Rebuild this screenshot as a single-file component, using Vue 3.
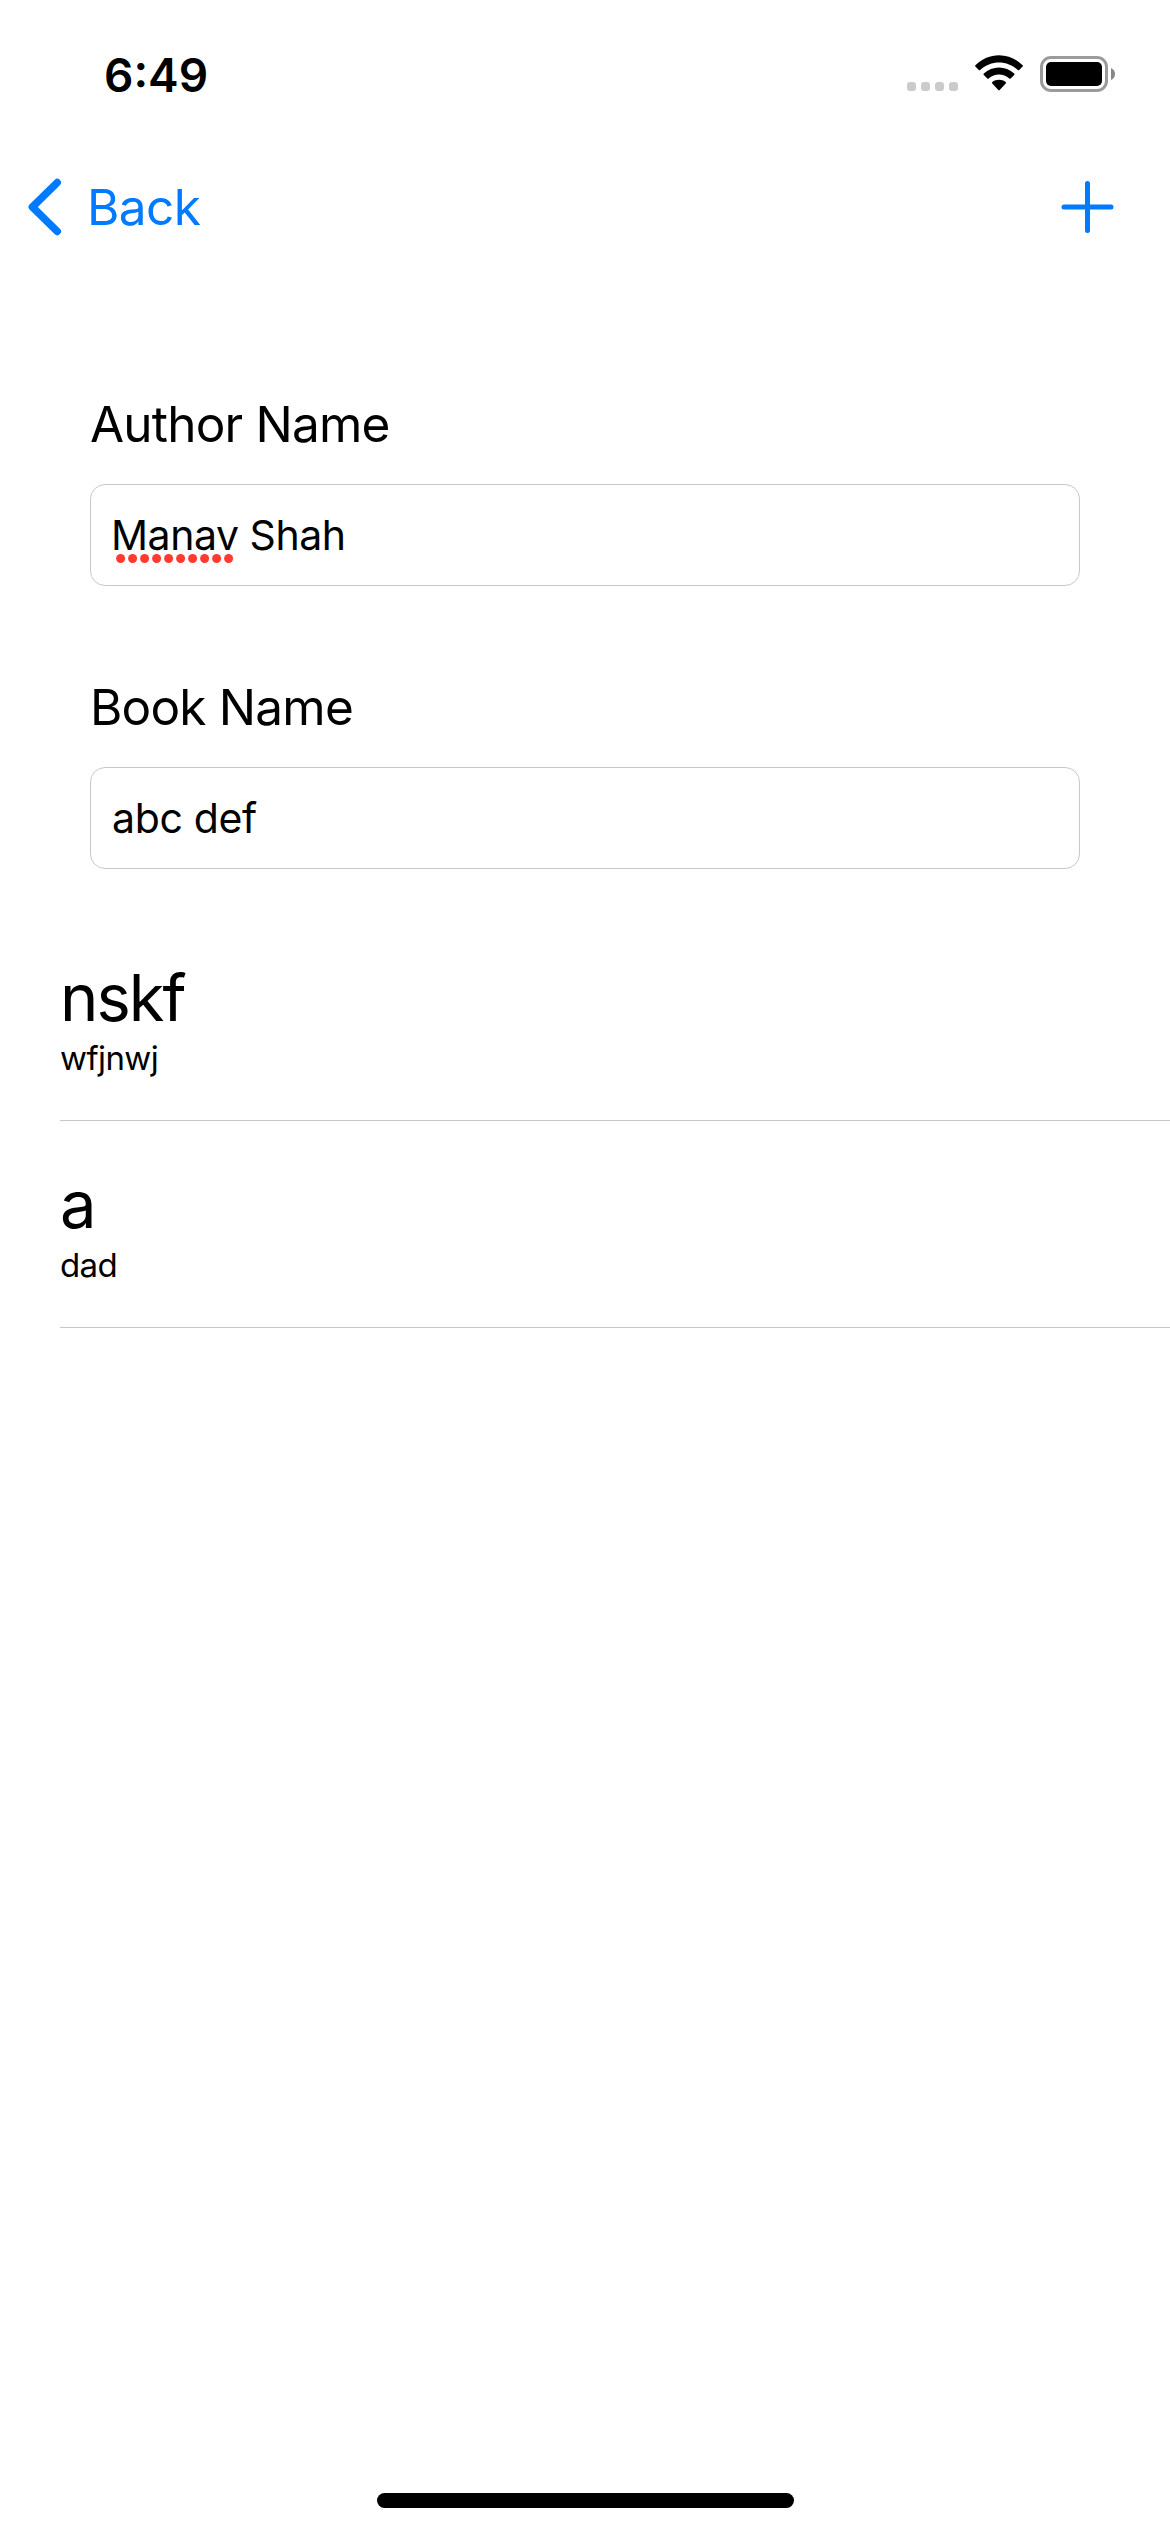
<script setup>
import { ref } from 'vue'

const author = ref({ flagged: 'Manav', rest: ' Shah' })
const book = ref('abc def')
const entries = ref([
  { title: 'nskf', subtitle: 'wfjnwj' },
  { title: 'a', subtitle: 'dad' },
])
</script>

<template>
  <div class="screen">
    <header class="status">
      <span class="time">6:49</span>
      <div class="indicators">
        <svg class="cell" width="51" height="9" viewBox="0 0 51 9" fill="#cbcbcb">
          <rect v-for="i in 4" :key="i" :x="(i - 1) * 14" y="0" width="9" height="9" rx="3" />
        </svg>
        <svg class="wifi" width="48" height="36" viewBox="0 0 48 36">
          <path d="M0.4 10.2C13.5-3.2 34.5-3.2 47.6 10.2Q48.3 10.9 47.6 11.6L44.2 15Q43.5 15.7 42.8 15C32.4 5 15.6 5 5.2 15Q4.5 15.7 3.8 15L0.4 11.6Q-0.3 10.9 0.4 10.2Z" />
          <path d="M8.8 18.6C17.2 10.5 30.8 10.5 39.2 18.6Q39.9 19.3 39.2 20L35.7 23.5Q35 24.2 34.3 23.5C28.5 18.3 19.5 18.3 13.7 23.5Q13 24.2 12.3 23.5L8.8 20Q8.1 19.3 8.8 18.6Z" />
          <path d="M17.3 27.1C21 23.9 27 23.9 30.7 27.1Q31.5 27.8 30.7 28.6L24.7 34.9Q24 35.7 23.3 34.9L17.3 28.6Q16.5 27.8 17.3 27.1Z" />
        </svg>
        <svg class="battery" width="75" height="36" viewBox="0 0 75 36">
          <rect x="1.5" y="1.5" width="65" height="33" rx="9.5" fill="none" stroke="#9b9b9b" stroke-width="3" />
          <rect x="6" y="6" width="56" height="24" rx="5" />
          <path d="M71 12Q75 14 75 18Q75 22 71 24Z" fill="#868686" />
        </svg>
      </div>
    </header>

    <nav class="nav">
      <a class="back">
        <svg width="34" height="58" viewBox="0 0 34 58" fill="none" stroke="#007aff" stroke-width="7.6" stroke-linecap="round" stroke-linejoin="round">
          <path d="M29.2 4.6L4.4 29L29.2 53.4" />
        </svg>
        <span>Back</span>
      </a>
      <svg class="add" width="53" height="53" viewBox="0 0 53 53" stroke="#007aff" stroke-width="5" stroke-linecap="round">
        <path d="M3 26H50M26.5 2.5V49.5" />
      </svg>
    </nav>

    <main>
      <form class="form">
        <div class="field">
          <label class="label">Author Name</label>
          <div class="input author"><span class="flagged">{{ author.flagged }}<svg class="dots" width="118" height="9" viewBox="0 0 118 9" fill="#ff3b30"><circle v-for="i in 10" :key="i" :cx="4.6 + (i - 1) * 12" cy="4.5" r="4.5" /></svg></span>{{ author.rest }}</div>
        </div>
        <div class="field">
          <label class="label">Book Name</label>
          <div class="input book">{{ book }}</div>
        </div>
      </form>
      <ul class="list">
        <li v-for="entry in entries" :key="entry.title" class="row">
          <div class="title">{{ entry.title }}</div>
          <div class="subtitle">{{ entry.subtitle }}</div>
        </li>
      </ul>
    </main>

    <footer class="home"><div class="bar"></div></footer>
  </div>
</template>

<style>
body {
  background: #fff;
}
</style>

<style scoped>
.screen {
  display: flex;
  flex-direction: column;
  box-sizing: border-box;
  width: 1170px;
  height: 2532px;
  background: #fff;
  color: #000;
  font-family: Inter, "Liberation Sans", sans-serif;
}
.status {
  display: flex;
  justify-content: space-between;
  box-sizing: border-box;
  height: 147px;
  padding: 45px 55px 0 104px;
}
.time {
  font-size: 46px;
  line-height: 60px;
  font-weight: 600;
}
.indicators {
  display: flex;
  align-items: flex-end;
  height: 46px;
}
.wifi {
  margin: 0 17px 0 17px;
}
.cell,
.wifi,
.battery {
  display: block;
}
.battery {
  margin-bottom: -1px;
}
.nav {
  display: flex;
  align-items: center;
  justify-content: space-between;
  box-sizing: border-box;
  height: 120px;
  padding: 0 56px 0 28px;
}
.back {
  display: flex;
  align-items: center;
  gap: 25px;
  color: #007aff;
  font-size: 49.5px;
  line-height: 60px;
  letter-spacing: -0.6px;
}
.form {
  padding: 127px 90px 0;
}
.field + .field {
  margin-top: 91px;
}
.label {
  display: block;
  margin-bottom: 30px;
  font-size: 49.5px;
  line-height: 60px;
  letter-spacing: -0.8px;
}
.input {
  box-sizing: border-box;
  height: 102px;
  padding-left: 20px;
  border: 1px solid #c8c8c8;
  border-radius: 15px;
  font-size: 41px;
  line-height: 100px;
  white-space: pre;
}
.author {
  letter-spacing: -0.45px;
}
.book {
  padding-left: 21px;
  letter-spacing: -0.35px;
}
.flagged {
  position: relative;
}
.dots {
  position: absolute;
  left: 5px;
  bottom: -3px;
}
.list {
  margin: 45px 0 0 60px;
  padding: 0;
  list-style: none;
}
.row {
  padding: 48px 0 38px;
  border-bottom: 1px solid #c8c8c8;
}
.title {
  font-size: 65px;
  line-height: 72px;
  letter-spacing: -2px;
}
.subtitle {
  font-size: 33px;
  line-height: 48px;
  letter-spacing: -0.6px;
}
.home {
  display: flex;
  justify-content: center;
  margin-top: auto;
  padding-bottom: 24px;
}
.bar {
  width: 417px;
  height: 15px;
  border-radius: 8px;
  background: #000;
}
</style>
